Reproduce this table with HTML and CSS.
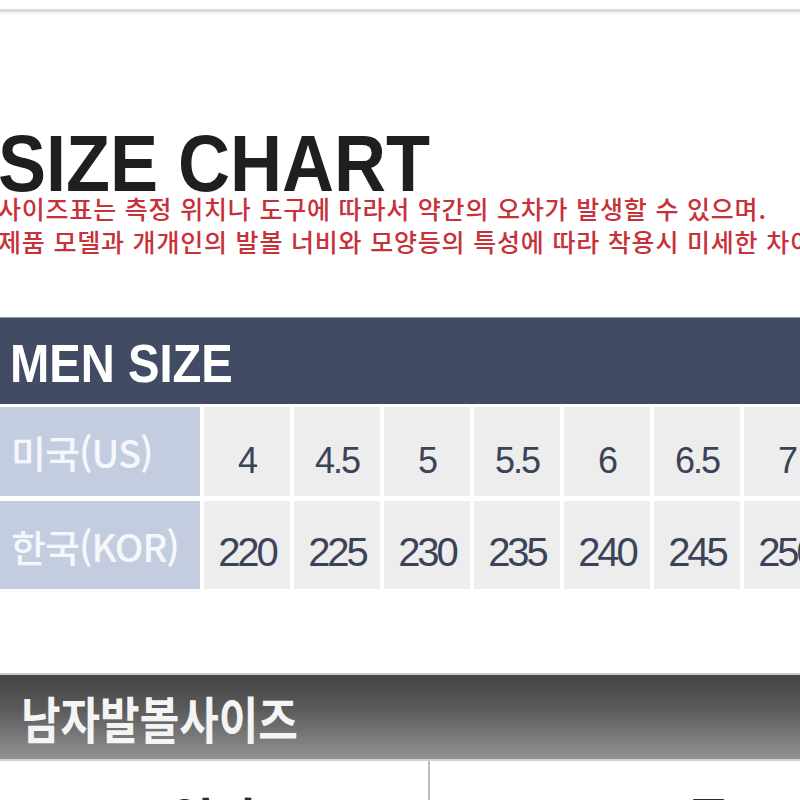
FILE: index.html
```html
<!DOCTYPE html>
<html lang="ko">
<head>
<meta charset="utf-8">
<title>SIZE CHART</title>
<link rel="stylesheet" href="styles.css">
</head>
<body>
<div class="page">
  <div class="top-line"></div>
  <h1 class="title"><span class="squeeze">SIZE CHART</span></h1>
  <div class="notice">
    <p>사이즈표는 측정 위치나 도구에 따라서 약간의 오차가 발생할 수 있으며.</p>
    <p>제품 모델과 개개인의 발볼 너비와 모양등의 특성에 따라 착용시 미세한 차이가 있을 수 있습니다.</p>
  </div>
  <div class="men-bar"><span class="squeeze">MEN SIZE</span></div>
  <div class="size-table">
    <div class="head">미국(US)</div>
    <div class="cell us">4</div>
    <div class="cell us">4.5</div>
    <div class="cell us">5</div>
    <div class="cell us">5.5</div>
    <div class="cell us">6</div>
    <div class="cell us">6.5</div>
    <div class="cell us">7</div>
    <div class="head">한국(KOR)</div>
    <div class="cell kor">220</div>
    <div class="cell kor">225</div>
    <div class="cell kor">230</div>
    <div class="cell kor">235</div>
    <div class="cell kor">240</div>
    <div class="cell kor">245</div>
    <div class="cell kor">250</div>
  </div>
  <div class="width-bar"><span class="width-title">남자발볼사이즈</span></div>
  <div class="width-row">
    <div class="width-col left"><span class="big">일반</span></div>
    <div class="width-col right"><span class="big">보통</span></div>
  </div>
</div>
</body>
</html>
```

FILE: styles.css
```css
html, body {
  margin: 0;
  padding: 0;
  background: #ffffff;
}

.page {
  width: 800px;
  height: 800px;
  overflow: hidden;
  display: flex;
  flex-direction: column;
}

.top-line {
  margin-top: 9px;
  height: 3px;
  background: #d9d9d9;
  box-shadow: 0 2px 2px #f0f0f0;
  flex: none;
}

.squeeze {
  display: inline-block;
  transform-origin: left center;
}

.title {
  margin: 124px 0 0 -2px;
  font-family: "Liberation Sans", Arial, sans-serif;
  font-weight: 700;
  font-size: 80px;
  line-height: 56px;
  height: 56px;
  color: #1f1f1f;
  white-space: nowrap;
  flex: none;
}

.title .squeeze {
  transform: scaleX(0.9);
}

.notice {
  margin: 0 0 0 -2px;
  flex: none;
}

.notice p {
  margin: 0;
  font-family: "Noto Sans CJK KR", sans-serif;
  font-weight: 500;
  font-size: 25px;
  line-height: 33px;
  letter-spacing: 0.8px;
  color: #c6313a;
  white-space: nowrap;
}

.men-bar {
  margin-top: 59px;
  height: 87px;
  box-sizing: border-box;
  padding: 5px 0 0 10px;
  background: #414c64;
  border-top: 1px solid #8c94a6;
  font-family: "Liberation Sans", Arial, sans-serif;
  font-weight: 700;
  font-size: 53px;
  line-height: 82px;
  color: #ffffff;
  white-space: nowrap;
  flex: none;
}

.men-bar .squeeze {
  transform: scaleX(0.89);
}

.size-table {
  margin-top: 3px;
  display: grid;
  grid-template-columns: 200px repeat(7, 86px);
  grid-template-rows: 89px 88px;
  column-gap: 4px;
  row-gap: 5px;
  width: 830px;
  flex: none;
}

.head {
  background: #c4cde0;
  color: #f5f7fb;
  font-family: "Noto Sans CJK KR", sans-serif;
  font-weight: 500;
  font-size: 38px;
  letter-spacing: -1px;
  display: flex;
  align-items: center;
  padding-left: 11px;
  white-space: nowrap;
}

.cell {
  background: #ededed;
  color: #3b4358;
  font-family: "Liberation Sans", Arial, sans-serif;
  display: flex;
  align-items: center;
  justify-content: center;
  box-sizing: border-box;
  white-space: nowrap;
}

.cell.us {
  font-size: 36px;
  letter-spacing: -2px;
  padding-top: 19px;
}

.cell.kor {
  font-size: 40px;
  letter-spacing: -3px;
  padding-top: 14px;
}

.width-bar {
  margin-top: 84px;
  height: 88px;
  box-sizing: border-box;
  border-top: 2px solid #c9c9c9;
  border-bottom: 2px solid #d0d0d0;
  background: linear-gradient(to bottom, #444444 0%, #5a5a5a 40%, #929292 100%);
  display: flex;
  align-items: center;
  padding-left: 21px;
  flex: none;
}

.width-title {
  display: inline-block;
  font-family: "Noto Sans CJK KR", sans-serif;
  font-weight: 700;
  font-size: 50px;
  line-height: 1;
  color: #f4f4f4;
  transform: scaleX(0.86);
  transform-origin: left center;
  white-space: nowrap;
}

.width-row {
  display: flex;
  flex: 1;
}

.width-col {
  padding-top: 32px;
  font-family: "Noto Sans CJK KR", sans-serif;
  font-weight: 700;
  font-size: 48px;
  line-height: 1;
  color: #2b2b2b;
}

.width-col.left {
  width: 430px;
  border-right: 2px solid #bdbdbd;
  padding-left: 170px;
  box-sizing: border-box;
}

.width-col.right {
  padding-left: 212px;
}
```
